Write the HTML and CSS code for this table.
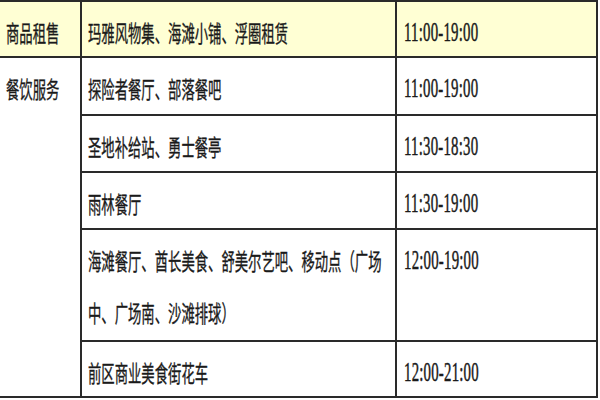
FILE: index.html
```html
<!DOCTYPE html>
<html lang="zh-CN">
<head>
<meta charset="utf-8">
<title>营业时间</title>
<link rel="stylesheet" href="styles.css">
</head>
<body>
<div class="sheet">
  <div class="cell cat head"><span class="t">商品租售</span></div>
  <div class="cell head"><span class="t">玛雅风物集、海滩小铺、浮圈租赁</span></div>
  <div class="cell time head"><span class="n">11:00-19:00</span></div>

  <div class="cell cat food"><span class="t">餐饮服务</span></div>
  <div class="cell r2"><span class="t">探险者餐厅、部落餐吧</span></div>
  <div class="cell time r2"><span class="n">11:00-19:00</span></div>

  <div class="cell r3"><span class="t">圣地补给站、勇士餐亭</span></div>
  <div class="cell time r3"><span class="n">11:30-18:30</span></div>

  <div class="cell r4"><span class="t">雨林餐厅</span></div>
  <div class="cell time r4"><span class="n">11:30-19:00</span></div>

  <div class="cell r5"><span class="t">海滩餐厅、酋长美食、舒美尔艺吧、移动点（广场<br>中、广场南、沙滩排球）</span></div>
  <div class="cell time r5"><span class="n">12:00-19:00</span></div>

  <div class="cell r6"><span class="t">前区商业美食街花车</span></div>
  <div class="cell time r6"><span class="n">12:00-21:00</span></div>
</div>
</body>
</html>
```
FILE: styles.css
```css
html, body {
  margin: 0;
  padding: 0;
  background: #ffffff;
  overflow: hidden;
}

.sheet {
  display: grid;
  grid-template-columns: 82px 315px 201px;
  grid-template-rows: 56px 58px 57px 57px 112px 56px;
  width: 598px;
  border-top: 2px solid #2a2a2a;
  background: #ffffff;
}

.cell {
  box-sizing: border-box;
  border-right: 2px solid #2a2a2a;
  border-bottom: 2px solid #2a2a2a;
  padding: 4px 0 0 6px;
  line-height: 52px;
  color: #1a1a1a;
  overflow: visible;
  min-width: 0;
}

.head {
  background: #ffffd4;
}

.time {
  padding-left: 7px;
}

.food {
  grid-row: 2 / span 5;
  grid-column: 1;
}

.t {
  display: inline-block;
  font-family: "Noto Sans CJK SC", "Noto Sans", sans-serif;
  font-size: 23px;
  white-space: nowrap;
  -webkit-text-stroke: 0.35px #1a1a1a;
  transform: scaleX(0.58);
  transform-origin: 0 50%;
}

.n {
  display: inline-block;
  font-family: "Liberation Serif", "DejaVu Serif", serif;
  font-size: 28px;
  letter-spacing: 0.4px;
  white-space: nowrap;
  -webkit-text-stroke: 0.5px #1a1a1a;
  transform: scaleX(0.53);
  transform-origin: 0 50%;
  color: #1a1a1a;
}
```
